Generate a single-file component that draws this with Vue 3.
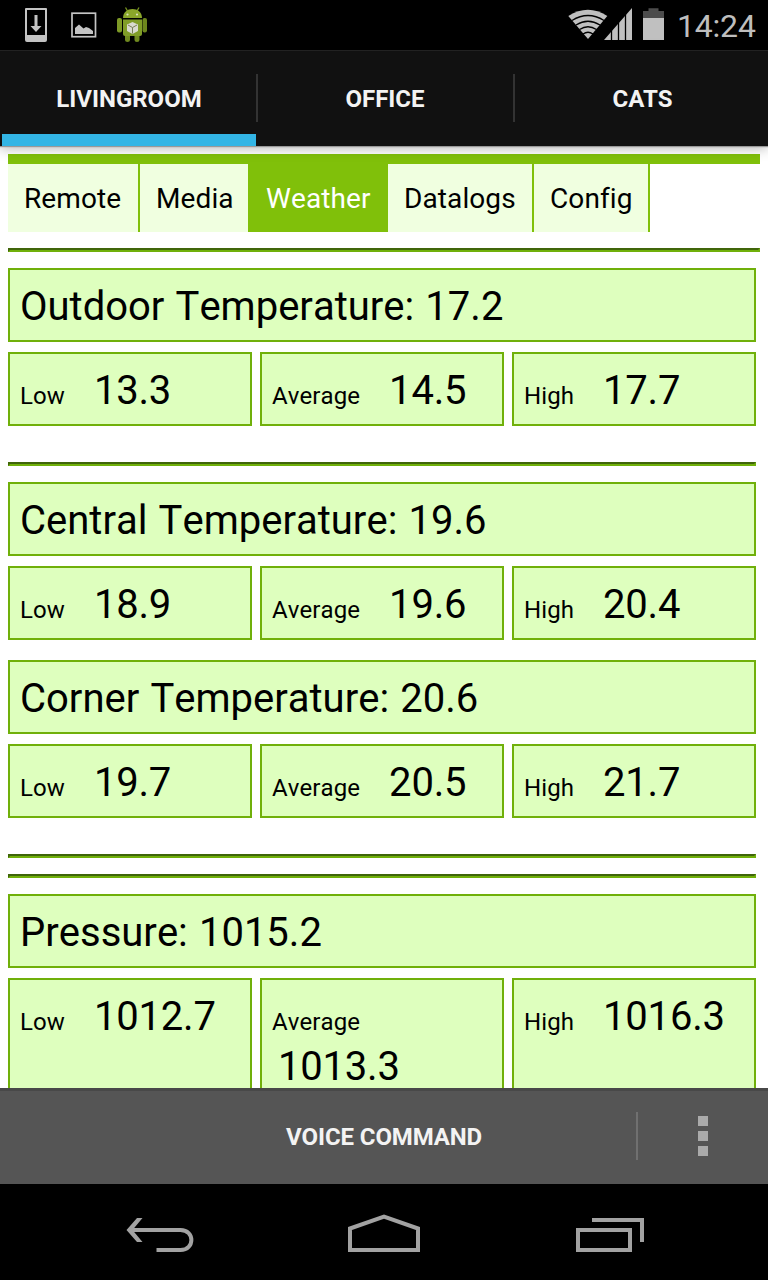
<script setup>
const rooms = ['LIVINGROOM', 'OFFICE', 'CATS']
const pages = ['Remote', 'Media', 'Weather', 'Datalogs', 'Config']
const groups = [
  [{ name: 'Outdoor Temperature', now: '17.2', low: '13.3', average: '14.5', high: '17.7' }],
  [
    { name: 'Central Temperature', now: '19.6', low: '18.9', average: '19.6', high: '20.4' },
    { name: 'Corner Temperature', now: '20.6', low: '19.7', average: '20.5', high: '21.7' },
  ],
  [],
  [{ name: 'Pressure', now: '1015.2', low: '1012.7', average: '1013.3', high: '1016.3' }],
]
</script>

<template>
  <div class="phone">
    <header class="status">
      <svg class="status-left" width="160" height="50" viewBox="0 0 160 50">
        <path fill="#c4c4c4" fill-rule="evenodd" d="M26 8h20q1 0 1 1v31q0 2-2 2H27q-2 0-2-2V9q0-1 1-1zM27 10v25h18V10z" />
        <path fill="#c4c4c4" d="M34.500 15h3v11h4L36 32l-5.500-6h4z" />
        <rect x="72" y="13.200" width="23.500" height="23.500" fill="none" stroke="#c4c4c4" stroke-width="1.700" />
        <path fill="#c4c4c4" d="M75 34v-6l4-3.500 4.500 4L86 27l3 1 4 3v3z" />
        <g>
          <path stroke="#78941f" stroke-width="1.300" d="M127.500 11l-2-3.500M137 11l2-3.500" />
          <path fill="#8aa62a" d="M123 18c0-12 19-12 19 0z" />
          <path fill="#809d28" d="M123 19.500h19V34q0 2-2 2h-15q-2 0-2-2z" />
          <rect x="117" y="18" width="5" height="14.500" rx="2" fill="#7d9926" />
          <rect x="142.500" y="18" width="4.500" height="14.500" rx="2" fill="#6d861d" />
          <path fill="#718b20" d="M125 36h5v4q0 2-2.500 2t-2.500-2zM134.500 36h5v4q0 2-2.500 2t-2.500-2z" />
          <circle cx="127.500" cy="14.500" r="1.100" fill="#d8dfbd" />
          <circle cx="137" cy="14.500" r="1.100" fill="#d8dfbd" />
          <path fill="#d9dacf" d="M132.500 22l5.500 2.500v6.500l-5.500 3-5.500-3v-6.500z" />
          <path fill="none" stroke="#777f57" stroke-width="1" d="M128 25l4.500 2.500 4.500-2.500M132.500 27.500v6" />
        </g>
      </svg>
      <svg class="status-right" width="100" height="50" viewBox="568 0 100 50">
        <path fill="#c0c0c0" d="M588 39L568.300 16q19.700-12.500 39 0z" />
        <g fill="none" stroke="#000" stroke-width="1.300">
          <path d="M572 20.500q16-10 32 0" />
          <path d="M576 25q12-7.500 24 0" />
          <path d="M579.500 29.500q8.500-5.500 17 0" />
          <path d="M583 34q5-3.500 10 0" />
        </g>
        <path fill="#c0c0c0" d="M604 40l28-32v32z" />
        <path stroke="#000" stroke-width="1.300" d="M611.500 20v21M618.500 15v26M625.500 10v31" />
        <path fill="#4c4c4c" d="M643 11h5.500V8.300h10V11h5.500v7h-21z" />
        <path fill="#c0c0c0" d="M643 18h21v22h-21z" />
      </svg>
      <span class="clock">14:24</span>
    </header>

    <nav class="rooms">
      <div v-for="(room, i) in rooms" :key="room" class="room" :class="{ active: i === 0 }">{{ room }}</div>
    </nav>

    <main class="content">
      <nav class="pages">
        <div v-for="page in pages" :key="page" class="page" :class="page.toLowerCase()"><span>{{ page }}</span></div>
      </nav>
      <hr class="wide">
      <template v-for="(group, g) in groups" :key="g">
        <hr v-if="g > 0">
        <section v-if="group.length" class="group">
          <div v-for="sensor in group" :key="sensor.name" class="sensor">
            <div class="box title">{{ sensor.name }}: {{ sensor.now }}</div>
            <div class="stats">
              <div class="box stat"><span class="label">Low</span><span class="value">{{ sensor.low }}</span></div>
              <div class="box stat"><span class="label">Average</span><span class="value">{{ sensor.average }}</span></div>
              <div class="box stat"><span class="label">High</span><span class="value">{{ sensor.high }}</span></div>
            </div>
          </div>
        </section>
      </template>
    </main>

    <footer class="actions">
      <div class="voice">VOICE COMMAND</div>
      <div class="more"><i></i><i></i><i></i></div>
    </footer>

    <div class="keys">
      <svg width="768" height="96" viewBox="0 1184 768 96" fill="none" stroke="#a2a2a2" stroke-width="4">
        <path d="M132 1230h48.500c14.500 0 14.500 20 0 20H156.500" />
        <path fill="#a2a2a2" stroke="none" d="M126.500 1230l10.500-12h5.500l-10 12 10 12H137z" />
        <path d="M350 1250v-21.500l34-12 34 12V1250z" />
        <path d="M578 1230h52v20h-52zM592 1220h50v22" />
      </svg>
    </div>
  </div>
</template>

<style>
body {
  margin: 0;
}
</style>

<style scoped>
.phone {
  width: 768px;
  height: 1280px;
  display: flex;
  flex-direction: column;
  overflow: hidden;
  background: #fff;
  color: #000;
  font-family: Roboto, "Liberation Sans", sans-serif;
  font-kerning: none;
}
.status {
  height: 50px;
  flex: none;
  display: flex;
  background: #000;
  color: #bebebe;
}
.status svg,
.keys svg {
  display: block;
}
.status-right {
  margin-left: 408px;
}
.clock {
  margin-left: 9px;
  font-size: 32px;
  letter-spacing: -0.2px;
  line-height: 53px;
  white-space: nowrap;
}
.rooms {
  height: 96px;
  flex: none;
  box-sizing: border-box;
  display: flex;
  border-top: 1px solid #222;
  background: #111;
  position: relative;
  box-shadow: 0 1px 1px #999, 0 2px 12px rgba(0, 0, 0, 0.3);
}
.room {
  width: 256px;
  box-sizing: border-box;
  display: flex;
  justify-content: center;
  padding-left: 2px;
  color: #f3f3f3;
  font-size: 24px;
  font-weight: 700;
  font-kerning: normal;
  line-height: 97px;
  background: linear-gradient(#333, #333) 0 23px / 2px 48px no-repeat;
}
.room:nth-child(3) {
  padding-left: 5px;
  background-position-x: 1px;
}
.room.active {
  background: linear-gradient(#33b5e5, #33b5e5) 2px 83px / 254px 12px no-repeat;
}
.content {
  flex: 1;
  min-height: 0;
  overflow: hidden;
  padding: 8px 8px 0;
}
.pages {
  height: 68px;
  display: flex;
  border-top: 10px solid #80c00a;
}
.page {
  box-sizing: border-box;
  height: 68px;
  padding-left: 16px;
  border-right: 2px solid #80c00a;
  background: #f0ffe0;
  font-size: 28px;
  letter-spacing: 0.1px;
  line-height: 70px;
  white-space: nowrap;
}
.remote { width: 132px; }
.media { width: 110px; }
.weather { width: 138px; background: #80c00a; color: #fff; }
.datalogs { width: 146px; }
.config { width: 116px; }
hr {
  box-sizing: border-box;
  width: 748px;
  height: 4px;
  margin: 16px 0;
  border: 2px solid;
  border-color: #40650a #70b00a #70b00a #40650a;
}
hr.wide {
  width: 752px;
}
.group {
  width: 748px;
  margin-bottom: 36px;
}
.sensor + .sensor {
  margin-top: 20px;
}
.box {
  box-sizing: border-box;
  min-height: 74px;
  padding: 12px 10px 8px;
  border: 2px solid #70b00a;
  background: #deffbe;
}
.title {
  font-size: 40px;
  line-height: 50px;
  word-spacing: 1.2px;
  white-space: nowrap;
}
.stats {
  display: grid;
  grid-template-columns: repeat(3, 244px);
  gap: 8px;
  margin-top: 10px;
}
.stat {
  display: flex;
  flex-wrap: wrap;
  align-items: flex-start;
  align-content: flex-start;
  line-height: 50px;
}
.label {
  margin-right: 23px;
  padding-top: 11px;
  font-size: 24px;
  letter-spacing: 0.1px;
  line-height: 39px;
}
.value {
  margin-left: 6px;
  font-size: 40px;
  letter-spacing: -0.2px;
}
.actions {
  height: 96px;
  flex: none;
  box-sizing: border-box;
  display: flex;
  border-top: 3px solid #484848;
  background: #555;
}
.voice {
  width: 636px;
  box-sizing: border-box;
  padding-left: 286px;
  color: #f3f3f3;
  font-size: 24px;
  font-weight: 700;
  letter-spacing: -0.1px;
  line-height: 92px;
  white-space: nowrap;
}
.more {
  width: 132px;
  box-sizing: border-box;
  display: flex;
  flex-direction: column;
  align-items: center;
  gap: 5px;
  padding: 25px 0 0 2px;
  background: linear-gradient(#707070, #707070) 0 21px / 2px 48px no-repeat;
}
.more i {
  width: 10px;
  height: 10px;
  background: #aaa;
}
.keys {
  height: 96px;
  flex: none;
  background: #000;
}
</style>
